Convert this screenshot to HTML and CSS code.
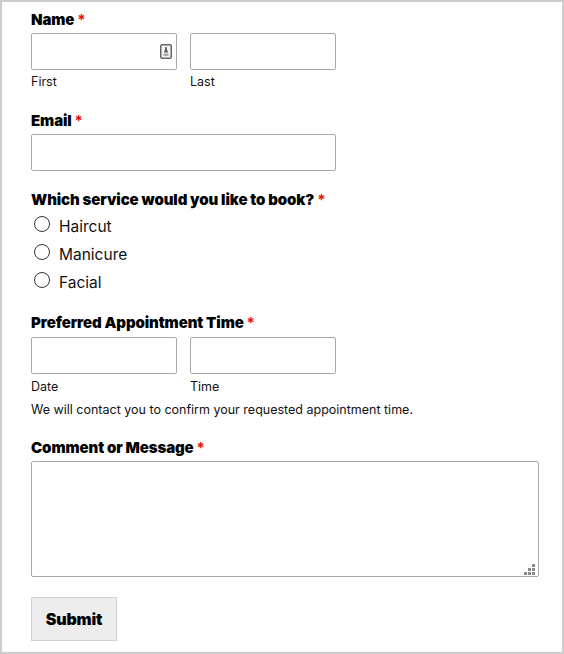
FILE: index.html
```html
<!DOCTYPE html>
<html lang="en">
<head>
    <meta charset="UTF-8">
    <meta name="viewport" content="width=device-width, initial-scale=1.0">
    <title>Book an Appointment</title>
    <link rel="stylesheet" href="styles.css">
</head>
<body>

    <form class="booking-form">
        <div class="field field-name">
            <div class="field-label">Name <span class="req">*</span></div>
            <div class="pair">
                <div class="sub">
                    <div class="input-wrap">
                        <input class="text-input" type="text">
                        <svg class="contact-icon" width="12" height="15" viewBox="0 0 12 15">
                            <rect x="0.75" y="0.75" width="10.5" height="13.5" rx="1.5" fill="#f4f4f4" stroke="#666" stroke-width="1.5"/>
                            <path d="M5.2 3 H6.8 V5 L8 8.5 H4 L5.2 5 Z" fill="#555"/>
                            <rect x="3.5" y="9.5" width="5" height="2.5" fill="#aaa"/>
                        </svg>
                    </div>
                    <div class="sub-label">First</div>
                </div>
                <div class="sub">
                    <input class="text-input" type="text">
                    <div class="sub-label">Last</div>
                </div>
            </div>
        </div>

        <div class="field field-email">
            <div class="field-label">Email <span class="req">*</span></div>
            <input class="text-input wide" type="email">
        </div>

        <div class="field field-service">
            <div class="field-label">Which service would you like to book? <span class="req">*</span></div>
            <div class="choices">
                <label class="choice"><input type="radio" name="service"> Haircut</label>
                <label class="choice"><input type="radio" name="service"> Manicure</label>
                <label class="choice"><input type="radio" name="service"> Facial</label>
            </div>
        </div>

        <div class="field field-time">
            <div class="field-label">Preferred Appointment Time <span class="req">*</span></div>
            <div class="pair">
                <div class="sub">
                    <input class="text-input" type="text">
                    <div class="sub-label">Date</div>
                </div>
                <div class="sub">
                    <input class="text-input" type="text">
                    <div class="sub-label">Time</div>
                </div>
            </div>
            <p class="note">We will contact you to confirm your requested appointment time.</p>
        </div>

        <div class="field field-comment">
            <div class="field-label">Comment or Message <span class="req">*</span></div>
            <div class="area-wrap">
                <textarea class="text-area"></textarea>
                <svg class="grip" width="11" height="11" viewBox="0 0 11 11" fill="#8c8c8c">
                    <rect x="8" y="0" width="3" height="3"/>
                    <rect x="4" y="4" width="3" height="3"/>
                    <rect x="8" y="4" width="3" height="3"/>
                    <rect x="0" y="8" width="3" height="3"/>
                    <rect x="4" y="8" width="3" height="3"/>
                    <rect x="8" y="8" width="3" height="3"/>
                </svg>
            </div>
        </div>

        <button class="submit" type="button">Submit</button>
    </form>

</body>
</html>
```

FILE: styles.css
```css
* {
    box-sizing: border-box;
}
body {
    margin: 0;
    background: #ffffff;
    color: #111;
    font-family: "Inter", "Liberation Sans", sans-serif;
}
.booking-form {
    width: 564px;
    height: 654px;
    border: 2px solid #cccccc;
    padding: 9px 23px 0 29px;
}
.field-label {
    font-size: 15px;
    font-weight: 900;
    line-height: 18px;
    letter-spacing: -0.1px;
    color: #000;
}
.req {
    color: #e81010;
    font-weight: 700;
}
.pair {
    display: flex;
    gap: 13px;
    margin-top: 4px;
}
.sub {
    width: 146px;
}
.input-wrap {
    position: relative;
}
.contact-icon {
    position: absolute;
    top: 11px;
    right: 5px;
}
.text-input {
    display: block;
    width: 100%;
    height: 37px;
    border: 1px solid #a8a8a8;
    border-radius: 2px;
    background: #fff;
}
.text-input.wide {
    width: 305px;
    margin-top: 4px;
}
.sub-label {
    font-size: 12.5px;
    line-height: 16px;
    margin-top: 4px;
    color: #111;
}
.field-email {
    margin-top: 22px;
}
.field-service {
    margin-top: 20px;
}
.choices {
    margin-top: 3px;
}
.choice {
    display: flex;
    align-items: center;
    gap: 9px;
    height: 28px;
    font-size: 15.5px;
    color: #111;
}
.choice input {
    appearance: none;
    width: 16px;
    height: 16px;
    margin: -4px 0 0 3px;
    border: 1.5px solid #333;
    border-radius: 50%;
    background: #fff;
}
.field-time {
    margin-top: 18px;
}
.field-time .pair {
    margin-top: 5px;
}
.field-time .sub-label {
    margin-top: 5px;
}
.note {
    margin: 7px 0 0;
    font-size: 12.5px;
    line-height: 16px;
    color: #111;
}
.field-comment {
    margin-top: 21px;
}
.area-wrap {
    position: relative;
    margin-top: 4px;
    height: 116px;
}
.text-area {
    display: block;
    width: 508px;
    height: 116px;
    border: 1px solid #a8a8a8;
    border-radius: 2px;
    resize: none;
}
.grip {
    position: absolute;
    left: 493px;
    top: 103px;
}
.submit {
    display: block;
    width: 86px;
    height: 44px;
    margin-top: 20px;
    border: 1px solid #d2d2d2;
    background: #ededed;
    color: #000;
    font-family: inherit;
    font-size: 16px;
    font-weight: 900;
    letter-spacing: -0.2px;
}
```
